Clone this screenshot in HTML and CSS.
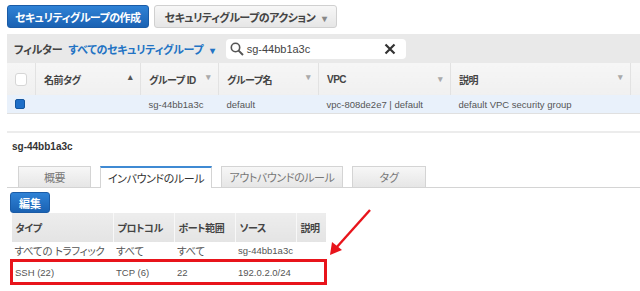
FILE: index.html
```html
<!DOCTYPE html>
<html lang="ja">
<head>
  <meta charset="UTF-8">
  <title>セキュリティグループ</title>
  <link rel="stylesheet" href="styles.css">
</head>
<body>
  <!-- ツールバー -->
  <div class="toolbar">
    <button class="btn btn-primary">セキュリティグループの作成</button>
    <button class="btn btn-default">セキュリティグループのアクション <span class="caret">▾</span></button>
  </div>

  <!-- フィルター -->
  <div class="filter-bar">
    <span class="filter-label">フィルター</span>
    <span class="filter-select">すべてのセキュリティグループ <span class="caret">▾</span></span>
    <div class="search-box">
      <svg class="search-icon" width="14" height="14" viewBox="0 0 14 14">
        <circle cx="5.5" cy="5.5" r="4.2" fill="none" stroke="#555" stroke-width="1.6"/>
        <line x1="8.6" y1="8.6" x2="13" y2="13" stroke="#555" stroke-width="2"/>
      </svg>
      <span class="search-text">sg-44bb1a3c</span>
      <svg class="clear-icon" width="12" height="12" viewBox="0 0 12 12">
        <path d="M1.5 1.5 L10.5 10.5 M10.5 1.5 L1.5 10.5" stroke="#333" stroke-width="2.2"/>
      </svg>
    </div>
  </div>

  <!-- 一覧 -->
  <table class="sg-list">
    <thead>
      <tr>
        <th class="col-check"><span class="checkbox"></span></th>
        <th class="col-name">名前タグ <span class="sort">▴</span></th>
        <th class="col-id">グループ ID <span class="sort light">▾</span></th>
        <th class="col-gname">グループ名 <span class="sort light">▾</span></th>
        <th class="col-vpc">VPC <span class="sort light">▾</span></th>
        <th class="col-desc">説明 <span class="sort light">▾</span></th>
        <th class="col-rest"></th>
      </tr>
    </thead>
    <tbody>
      <tr class="selected">
        <td class="col-check"><span class="checkbox checked"></span></td>
        <td></td>
        <td>sg-44bb1a3c</td>
        <td>default</td>
        <td>vpc-808de2e7 | default</td>
        <td>default VPC security group</td>
        <td></td>
      </tr>
    </tbody>
  </table>

  <!-- 詳細 -->
  <div class="detail">
    <div class="detail-title">sg-44bb1a3c</div>

    <div class="tabs">
      <div class="tab tab-overview">概要</div>
      <div class="tab tab-inbound active">インバウンドのルール</div>
      <div class="tab tab-outbound">アウトバウンドのルール</div>
      <div class="tab tab-tags">タグ</div>
    </div>

    <button class="btn btn-primary btn-edit">編集</button>

    <table class="rules">
      <thead>
        <tr>
          <th class="r-type">タイプ</th>
          <th class="r-proto">プロトコル</th>
          <th class="r-port">ポート範囲</th>
          <th class="r-src">ソース</th>
          <th class="r-desc">説明</th>
        </tr>
      </thead>
      <tbody>
        <tr>
          <td>すべての トラフィック</td>
          <td>すべて</td>
          <td>すべて</td>
          <td class="latin">sg-44bb1a3c</td>
          <td></td>
        </tr>
        <tr class="highlight">
          <td class="latin">SSH (22)</td>
          <td class="latin">TCP (6)</td>
          <td class="latin">22</td>
          <td class="latin">192.0.2.0/24</td>
          <td></td>
        </tr>
      </tbody>
    </table>
  </div>

  <!-- 注釈の矢印 -->
  <svg class="arrow" width="60" height="60" viewBox="0 0 60 60">
    <line x1="48" y1="1" x2="14" y2="39" stroke="#e8141b" stroke-width="2.4"/>
    <polygon points="8,46 10,33 20,41" fill="#e8141b"/>
  </svg>
</body>
</html>
```

FILE: styles.css
```css
body {
  margin: 0;
  background: #fff;
  color: #444;
  font-family: 'Liberation Sans', 'Noto Sans CJK JP', sans-serif;
  font-size: 11px;
  font-feature-settings: "palt";
  position: relative;
  width: 640px;
  height: 291px;
  overflow: hidden;
}
.toolbar {
  display: flex;
  gap: 5px;
  padding: 5px 0 0 7px;
  height: 29px;
  box-sizing: border-box;
}
.btn {
  font-family: inherit;
  font-feature-settings: "palt";
  font-size: 11px;
  font-weight: bold;
  letter-spacing: -0.5px;
  height: 23px;
  padding: 0 7px;
  border-radius: 3px;
  cursor: pointer;
}
.btn-primary {
  color: #fff;
  background: linear-gradient(#2f82d6, #1a62b3);
  border: 1px solid #1a5ba6;
}
.btn-default {
  color: #444;
  background: linear-gradient(#f7f7f7, #e6e6e6);
  border: 1px solid #d0d0d0;
  padding: 0 10px;
}
.caret {
  font-size: 10px;
  color: #888;
  margin-left: 4px;
}
.filter-bar {
  margin: 5px 0 0 7px;
  height: 29px;
  background: #e9e9e9;
  display: flex;
  align-items: center;
  padding-left: 7px;
  letter-spacing: -0.3px;
}
.filter-label {
  font-weight: bold;
  color: #444;
}
.filter-select {
  color: #2273c4;
  font-weight: bold;
  margin-left: 6px;
}
.filter-select .caret {
  color: #2273c4;
  margin-left: 4px;
}
.search-box {
  margin-left: 11px;
  width: 180px;
  height: 20px;
  background: #fff;
  border-radius: 4px;
  display: flex;
  align-items: center;
  box-sizing: border-box;
  padding: 0 10px 0 4px;
  letter-spacing: 0;
}
.search-icon {
  margin-right: 3px;
}
.search-text {
  flex: 1;
  color: #444;
  font-size: 11px;
}
.sg-list {
  margin-left: 7px;
  width: 633px;
  border-collapse: collapse;
  font-size: 9.5px;
}
.sg-list th {
  height: 32px;
  background: linear-gradient(#f6f6f6, #f0f0f0);
  text-align: left;
  font-size: 10px;
  letter-spacing: -0.5px;
  color: #444;
  padding: 0 0 0 8px;
  border-right: 1px solid #e2e2e2;
  position: relative;
}
.sg-list th:last-child {
  border-right: none;
}
.sg-list td {
  height: 18px;
  padding: 0 0 0 8px;
  color: #555;
  border-bottom: 1px solid #e0e0e0;
}
.sg-list .selected td {
  background: #e9f1fb;
}
.col-check { width: 20px; padding-left: 8px !important; }
.col-name { width: 96px; }
.col-id { width: 69px; }
.col-gname { width: 91px; }
.col-vpc { width: 123px; }
.col-desc { width: 171px; }
.sort {
  position: absolute;
  right: 8px;
  font-size: 9px;
  color: #555;
}
.sort.light {
  color: #aaa;
}
.checkbox {
  display: block;
  width: 10px;
  height: 11px;
  background: #fff;
  border: 1px solid #d6d6d6;
  border-radius: 3px;
}
.checkbox.checked {
  width: 8px;
  height: 8px;
  background: #1f6fc8;
  border: 1px solid #15569e;
  border-radius: 2px;
}
.detail {
  margin: 17px 0 0 7px;
  border-top: 2px solid #ececec;
}
.detail-title {
  font-weight: bold;
  color: #333;
  font-size: 10px;
  padding: 8px 0 0 5px;
  height: 25px;
}
.tabs {
  display: flex;
  gap: 9px;
  padding-left: 11px;
  border-bottom: 1px solid #d4d4d4;
  height: 21px;
}
.tab {
  height: 21px;
  box-sizing: border-box;
  border: 1px solid #d4d4d4;
  border-bottom: none;
  background: linear-gradient(#f7f7f7, #e6e6e6);
  display: flex;
  align-items: center;
  justify-content: center;
  color: #777;
  font-size: 11px;
  letter-spacing: -0.4px;
}
.tab.active {
  background: #fff;
  border-top: 2px solid #3f8ad3;
  color: #333;
  height: 22px;
}
.tab-overview { width: 73px; }
.tab-inbound { width: 112px; }
.tab-outbound { width: 122px; }
.tab-tags { width: 74px; }
.btn-edit {
  display: block;
  margin: 4px 0 0 3px;
  height: 21px;
  width: 40px;
  padding: 0;
  font-size: 11px;
  letter-spacing: 0;
}
.rules {
  margin-left: 3px;
  width: 317px;
  border-collapse: collapse;
  font-size: 10.5px;
  letter-spacing: -0.3px;
}
.rules th {
  height: 29px;
  background: linear-gradient(#ededed, #e4e4e4);
  border-right: 1px solid #f8f8f8;
  text-align: left;
  font-size: 10px;
  letter-spacing: -0.4px;
  color: #444;
  padding: 0 0 0 4px;
}
.rules th:last-child {
  border-right: none;
  padding-left: 4px;
}
.rules td {
  height: 17px;
  padding: 0 0 0 3px;
  color: #555;
}
.rules td.latin {
  font-size: 9.5px;
  letter-spacing: 0;
}
.r-type { width: 97px; }
.r-proto { width: 56px; }
.r-port { width: 56px; }
.r-src { width: 56px; }
.rules .highlight td {
  height: 20px;
  border-top: 3px solid #e8141b;
  border-bottom: 3px solid #e8141b;
}
.rules .highlight td:first-child {
  border-left: 3px solid #e8141b;
  padding-left: 2px;
}
.rules .highlight td:last-child {
  border-right: 3px solid #e8141b;
}
.arrow {
  position: absolute;
  left: 322px;
  top: 209px;
}
```
